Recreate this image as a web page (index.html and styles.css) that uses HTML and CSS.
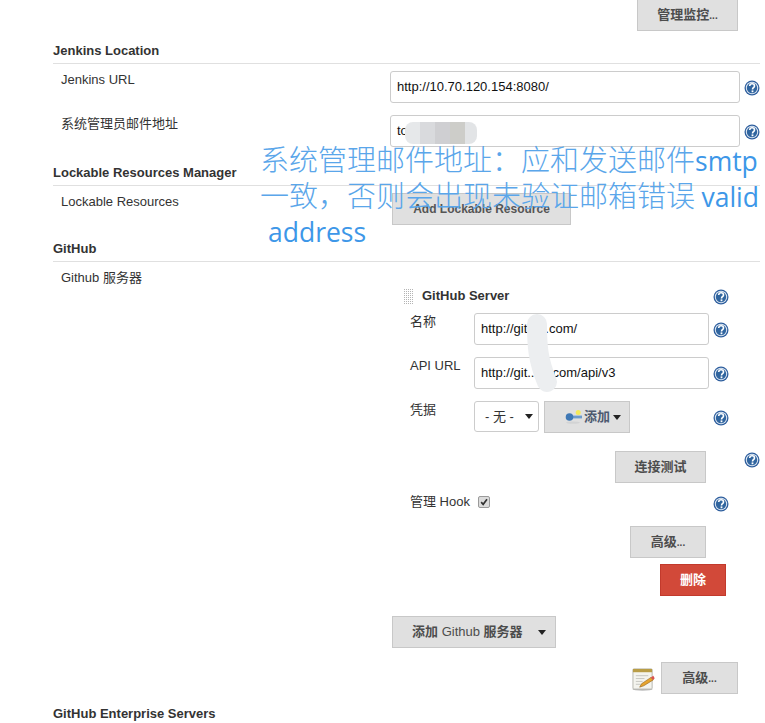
FILE: index.html
```html
<!DOCTYPE html>
<html lang="zh">
<head>
<meta charset="utf-8">
<title>Jenkins</title>
<link rel="stylesheet" href="styles.css">
</head>
<body>
<svg class="defs" width="0" height="0" aria-hidden="true">
  <symbol id="help" viewBox="0 0 16 16">
    <circle cx="8" cy="8" r="7.5" fill="#2f5f9e"/>
    <circle cx="8" cy="8" r="6.2" fill="#dfe8f3"/>
    <circle cx="8" cy="8" r="5.2" fill="#30659f"/>
    <path d="M5.7 6C5.8 4.5 6.9 3.8 8.1 3.8c1.4 0 2.4.9 2.4 2.1 0 1.8-2 1.8-2 3.5" fill="none" stroke="#fff" stroke-width="1.6"/>
    <rect x="7.6" y="10.4" width="1.8" height="1.8" fill="#fff"/>
  </symbol>
</svg>
<main class="page">
  <div class="top-actions"><button class="btn btn-monitor">管理监控<span class="dots">...</span></button></div>

  <h2 class="section section-first">Jenkins Location</h2>
  <div class="row row-first">
    <div class="label">Jenkins URL</div>
    <div class="input">http://10.70.120.154:8080/</div>
    <svg class="help"><use href="#help"/></svg>
  </div>
  <div class="row row-next">
    <div class="label">系统管理员邮件地址</div>
    <div class="input">to.........om</div>
    <svg class="help"><use href="#help"/></svg>
  </div>

  <h2 class="section section-lock">Lockable Resources Manager</h2>
  <div class="row row-first">
    <div class="label">Lockable Resources</div>
    <div class="value-indent"><button class="btn btn-lock">Add Lockable Resource</button></div>
  </div>

  <h2 class="section section-github">GitHub</h2>
  <div class="row row-first row-github">
    <div class="label">Github 服务器</div>
    <div class="server">
      <div class="server-head">
        <span class="handle"></span>
        <strong class="server-title">GitHub Server</strong>
        <svg class="help"><use href="#help"/></svg>
      </div>
      <div class="sub-row">
        <div class="sub-label">名称</div>
        <div class="input">http://git......com/</div>
        <svg class="help"><use href="#help"/></svg>
      </div>
      <div class="sub-row sub-next">
        <div class="sub-label">API URL</div>
        <div class="input">http://git.......com/api/v3</div>
        <svg class="help"><use href="#help"/></svg>
      </div>
      <div class="sub-row sub-next">
        <div class="sub-label">凭据</div>
        <div class="cred">
          <div class="select"><span>- 无 -</span><i class="arrow"></i></div>
          <button class="btn btn-add">
            <svg class="key" viewBox="0 0 17 14"><ellipse cx="8" cy="12.6" rx="7" ry="1.2" fill="#d2d3d4"/><circle cx="13.2" cy="2.6" r="2.5" fill="#f5ea5a"/><rect x="6" y="5.6" width="11" height="2.8" fill="#6c9bcc"/><circle cx="4.5" cy="7" r="3.8" fill="#3f78b5"/></svg>
            <span>添加</span><i class="arrow arrow-add"></i>
          </button>
        </div>
        <svg class="help"><use href="#help"/></svg>
      </div>
      <div class="test-row">
        <button class="btn btn-test">连接测试</button>
        <svg class="help help-test"><use href="#help"/></svg>
      </div>
      <div class="hook-row">
        <div class="hook-label">管理 Hook</div>
        <span class="check"><svg viewBox="0 0 12 12"><path d="M2.6 6.2 5 8.8 9.6 2.8" fill="none" stroke="#333" stroke-width="2"/></svg></span>
        <svg class="help"><use href="#help"/></svg>
      </div>
      <div class="adv-row"><button class="btn btn-adv">高级<span class="dots">...</span></button></div>
      <div class="del-row"><button class="btn btn-del">删除</button></div>
      <div class="add-server-row">
        <button class="btn btn-add-server"><span>添加 <span class="plain">Github</span> 服务器</span><i class="arrow"></i></button>
      </div>
    </div>
  </div>

  <div class="bottom-actions">
    <svg class="note" viewBox="0 0 24 24">
      <ellipse cx="11" cy="22.2" rx="10.5" ry="1.5" fill="#bdbdbd"/>
      <rect x="1" y="1" width="20" height="21" rx="1" fill="#f4f4ee" stroke="#b5b5ad"/>
      <rect x="1" y="1" width="20" height="3.4" fill="#b99d46"/>
      <path d="M4 8h13M4 11h9M4 14h7M4 17h5" stroke="#c5c5c0" stroke-width="1"/>
      <path d="M8 20l2-3.6 9.8-6.6 2.4 2.6-10 6.2z" fill="#e7a52f" stroke="#8c5a14" stroke-width=".6"/>
      <path d="M19.6 9.8l2.6-1.6 1.5 2.6-1.6 1.7z" fill="#d9534f"/>
    </svg>
    <button class="btn btn-adv-main">高级<span class="dots">...</span></button>
  </div>

  <h2 class="section section-enterprise">GitHub Enterprise Servers</h2>
</main>

<div class="smudge smudge-mail"></div>
<svg class="smudge-git" width="60" height="100" viewBox="0 0 60 100"><path d="M19 22C19 44 20 58 29 80" fill="none" stroke="#eceef0" stroke-width="20" stroke-linecap="round"/></svg>

<div class="annotation">
  <div class="annotation-line">系统管理邮件地址：应和发送邮件<span class="latin">smtp</span></div>
  <div class="annotation-line">一致，否则会出现未验证邮箱错误 <span class="latin">valid</span></div>
  <div class="annotation-line annotation-last"><span class="latin">address</span></div>
</div>
</body>
</html>
```
FILE: styles.css
```css
* { box-sizing: border-box; }
html, body { margin: 0; padding: 0; height: 723px; overflow: hidden; background: #fff; }
body {
  position: relative;
  font-family: "Liberation Sans", "Noto Sans CJK SC", sans-serif;
  font-size: 13px;
  line-height: 16px;
  color: #333;
}
.defs { position: absolute; }
.page { padding: 0 5px 0 53px; width: 765px; }

.btn {
  display: block;
  height: 32px;
  padding: 0;
  font: bold 13px/16px "Liberation Sans", "Noto Sans CJK SC", sans-serif;
  color: #4d4d4d;
  background: #e0e0e0;
  border: 1px solid #c8c8c8;
  border-radius: 0;
}
.dots { font-size: 10px; font-weight: bold; }
.plain { font-weight: normal; }
.top-actions { display: flex; justify-content: flex-end; margin: -1px 22px 0 0; }
.btn-monitor { width: 101px; }

.section {
  margin: 0;
  padding-bottom: 4px;
  font-size: 13px;
  line-height: 16px;
  font-weight: bold;
  color: #333;
  border-bottom: 1px solid #e0e0e0;
}
.section-first { margin-top: 12px; }
.section-lock { margin-top: 18px; }
.section-github { margin-top: 16px; }
.section-enterprise { margin-top: 12px; border-bottom: 0; }

.row { display: grid; grid-template-columns: 337px 350px 20px; }
.row-first { margin-top: 7px; }
.row-next { margin-top: 12px; }
.label { padding: 1px 0 0 8px; font-size: 13px; }
.help { display: block; width: 16px; height: 16px; }
.row > .help { margin: 9px 0 0 4px; }

.input {
  height: 32px;
  padding: 0 6px;
  font-size: 13px;
  line-height: 30px;
  color: #111;
  background: #fff;
  border: 1px solid #ccc;
  border-radius: 3px;
  white-space: nowrap;
  overflow: hidden;
}
.value-indent { padding-left: 2px; }
.btn-lock { width: 179px; font-size: 12px; color: #555; }

.row-github { display: grid; grid-template-columns: 337px 370px; }
.server { padding-top: 18px; }
.server-head { display: flex; align-items: flex-start; width: 339px; height: 26px; padding-left: 13px; }
.handle {
  width: 11px;
  height: 16px;
  margin-top: 1px;
  background-color: #b4b4b4;
  background-image: linear-gradient(#fff 1px, transparent 1px), linear-gradient(90deg, #fff 1px, transparent 1px);
  background-size: 2px 2px;
}
.server-title { margin: 1px 0 0 8px; font-size: 13px; line-height: 16px; }
.server-head .help { margin: 2px 0 0 auto; }

.sub-row { display: grid; grid-template-columns: 84px 235px 20px; }
.sub-next { margin-top: 12px; }
.sub-label { padding: 1px 0 0 20px; font-size: 13px; }
.sub-row > .help { margin: 9px 0 0 4px; }
.cred { display: flex; gap: 5px; }
.select {
  display: flex;
  align-items: center;
  justify-content: space-between;
  width: 65px;
  height: 31px;
  padding: 0 5px 0 10px;
  font-size: 13px;
  background: #fff;
  border: 1px solid #ccc;
  border-radius: 3px;
}
.arrow {
  display: block;
  width: 0;
  height: 0;
  border-left: 4px solid transparent;
  border-right: 4px solid transparent;
  border-top: 5px solid #222;
}
.btn-add { display: flex; align-items: center; width: 86px; padding-left: 20px; color: #4d5a70; }
.key { width: 17px; height: 14px; margin-right: 2px; flex: none; }
.arrow-add { margin-left: 3px; }

.test-row { display: flex; align-items: flex-start; margin-top: 18px; }
.btn-test { width: 91px; margin-left: 225px; }
.help-test { margin: 1px 0 0 38px; }

.hook-row { display: flex; align-items: flex-start; margin-top: 10px; padding-left: 20px; }
.hook-label { width: 68px; padding-top: 1px; font-size: 13px; }
.check {
  display: block;
  width: 12px;
  height: 12px;
  margin-top: 3px;
  background: #dcdcdc;
  border: 1px solid #9a9a9a;
  border-radius: 2px;
  overflow: hidden;
}
.check svg { display: block; width: 10px; height: 10px; }
.hook-row .help { margin: 3px 0 0 223px; }

.adv-row { margin-top: 14px; padding-left: 240px; }
.btn-adv { width: 76px; }
.del-row { margin-top: 6px; padding-left: 270px; }
.btn-del { width: 66px; color: #fff; background: #d24939; border-color: #c23a2c; }
.add-server-row { margin-top: 20px; padding-left: 2px; }
.btn-add-server { display: flex; align-items: center; justify-content: space-between; width: 164px; padding: 0 9px 0 19px; }

.bottom-actions { display: flex; justify-content: flex-end; align-items: center; gap: 6px; margin: 14px 22px 0 0; }
.note { width: 23px; height: 23px; display: block; margin-top: 2px; }
.btn-adv-main { width: 77px; }

.smudge {
  position: absolute;
  left: 405px;
  top: 122px;
  width: 72px;
  height: 22px;
  border-radius: 8px;
  background: linear-gradient(90deg, #e6e8ea 0 15px, #d9dadd 15px 30px, #cfcfd2 30px 45px, #cdcdc9 45px 60px, #e2e4e6 60px 72px);
}
.smudge-git { position: absolute; left: 518px; top: 302px; }

.annotation {
  position: absolute;
  left: 260px;
  top: 140px;
  width: 505px;
  font-family: "Noto Sans CJK SC", sans-serif;
  font-weight: 300;
  font-size: 29px;
  color: #5aa6ea;
  white-space: nowrap;
}
.annotation-line { height: 35.6px; line-height: 36px; }
.latin { font-family: "Open Sans", sans-serif; font-weight: 500; color: #3d97e8; font-size: 26.5px; line-height: 1; }
.annotation-last { padding-left: 8px; }
```
